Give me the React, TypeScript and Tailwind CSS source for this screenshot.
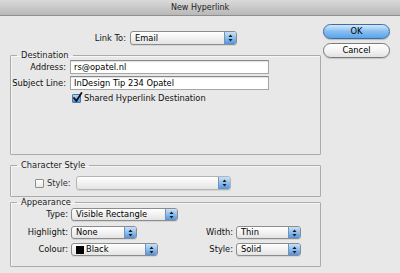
import React from "react";

const font = { fontFamily: '"DejaVu Sans", "Liberation Sans", sans-serif' };

function Arrows() {
  return (
    <svg width="5" height="8" viewBox="0 0 5 8" className="block">
      <path d="M2.5 0.5 L4.5 3 L0.5 3 Z" fill="#1a1a1a" />
      <path d="M2.5 7.5 L4.5 5 L0.5 5 Z" fill="#1a1a1a" />
    </svg>
  );
}

function Popup({
  w,
  h = 13,
  children,
  disabled = false,
}: {
  w: string;
  h?: number;
  children?: React.ReactNode;
  disabled?: boolean;
}) {
  return (
    <div
      className={`${w} ${h === 14 ? "h-[14px]" : "h-[13px]"} flex rounded-[3px] border ${
        disabled ? "border-[#b4b4b4]" : "border-[#8c8c8c]"
      } bg-linear-to-b from-[#ffffff] to-[#e4e4e4] shadow-[0_1px_0_rgba(0,0,0,0.08)] overflow-hidden`}
    >
      <div className="flex-1 flex items-center pl-[4px] leading-none text-black">{children}</div>
      <div className="w-[12px] flex items-center justify-center border-l border-[#6f93bd] bg-linear-to-b from-[#c9e0f7] via-[#8fbdeb] to-[#4f94dc]">
        <Arrows />
      </div>
    </div>
  );
}

function Input({ value }: { value: string }) {
  return (
    <div className="w-[199px] h-[14px] bg-white border border-[#a6a6a6] border-t-[#8a8a8a] shadow-[inset_0_1px_1px_rgba(0,0,0,0.12)] flex items-center pl-[3px] leading-none text-black">
      {value}
    </div>
  );
}

function Checkbox({ checked }: { checked?: boolean }) {
  return (
    <div
      className={`relative w-[9px] h-[9px] rounded-[1px] border ${
        checked
          ? "border-[#4a76a8] bg-linear-to-b from-[#b7d6f5] to-[#4f94dc]"
          : "border-[#8e8e8e] bg-linear-to-b from-[#ffffff] to-[#e9e9e9]"
      }`}
    >
      {checked && (
        <svg width="11" height="11" viewBox="0 0 11 11" className="absolute left-[-1px] top-[-3px]">
          <path d="M2 6 L4.3 9 L9.5 1" stroke="#111" strokeWidth="1.8" fill="none" strokeLinecap="round" strokeLinejoin="round" />
        </svg>
      )}
    </div>
  );
}

function Group({
  title,
  className,
  children,
}: {
  title: string;
  className: string;
  children: React.ReactNode;
}) {
  return (
    <fieldset className={`border border-[#ababab] rounded-[1px] shadow-[inset_1px_1px_0_#f6f6f6] ${className}`}>
      <legend className="ml-[6px] px-[4px] leading-[10px] text-[#1a1a1a]">{title}</legend>
      {children}
    </fieldset>
  );
}

export default function App() {
  return (
    <div className="w-[400px] h-[273px] bg-[#e8e8e8] flex flex-col text-[8.3px] text-[#111] overflow-hidden" style={font}>
      <div className="h-[16px] shrink-0 flex items-center justify-center bg-linear-to-b from-[#dadada] to-[#b8b8b8] border-b border-[#8f8f8f] text-[8px] text-[#222] leading-none">
        New Hyperlink
      </div>
      <div className="flex flex-1">
        <div className="w-[311px] ml-[10px] flex flex-col">
          <div className="mt-[15px] h-[14px] flex items-center">
            <span className="w-[116px] text-right">Link To:</span>
            <div className="ml-[4px]">
              <Popup w="w-[107px]" h={14}>Email</Popup>
            </div>
          </div>

          <Group title="Destination" className="mt-[5px] pb-[51px]">
            <div className="flex items-center h-[14px]">
              <span className="w-[55px] text-right">Address:</span>
              <div className="ml-[4px]">
                <Input value="rs@opatel.nl" />
              </div>
            </div>
            <div className="flex items-center h-[14px] mt-[2px]">
              <span className="w-[55px] text-right">Subject Line:</span>
              <div className="ml-[4px]">
                <Input value="InDesign Tip 234 Opatel" />
              </div>
            </div>
            <div className="flex items-center h-[10px] mt-[3px] pl-[61px]">
              <Checkbox checked />
              <span className="ml-[3px]">Shared Hyperlink Destination</span>
            </div>
          </Group>

          <Group title="Character Style" className="mt-[5px] pb-[6px]">
            <div className="flex items-center h-[14px] mt-[6px] pl-[24px]">
              <Checkbox />
              <span className="ml-[3px] text-[#333]">Style:</span>
              <div className="ml-[5px]">
                <Popup w="w-[155px]" h={14} disabled />
              </div>
            </div>
          </Group>

          <Group title="Appearance" className="mt-0 pb-[10px]">
            <div className="flex items-center h-[13px] mt-[1px]">
              <span className="w-[57px] text-right">Type:</span>
              <div className="ml-[3px]">
                <Popup w="w-[107px]">Visible Rectangle</Popup>
              </div>
            </div>
            <div className="flex items-center justify-between h-[13px] mt-[5px] pr-[19px]">
              <div className="flex items-center">
                <span className="w-[57px] text-right">Highlight:</span>
                <div className="ml-[3px]">
                  <Popup w="w-[66px]">None</Popup>
                </div>
              </div>
              <div className="flex items-center">
                <span className="text-right">Width:</span>
                <div className="ml-[3px]">
                  <Popup w="w-[65px]">Thin</Popup>
                </div>
              </div>
            </div>
            <div className="flex items-center justify-between h-[13px] mt-[4px] pr-[19px]">
              <div className="flex items-center">
                <span className="w-[57px] text-right">Colour:</span>
                <div className="ml-[3px]">
                  <Popup w="w-[87px]">
                    <span className="inline-block w-[8px] h-[8px] bg-black mr-[2px]" />
                    Black
                  </Popup>
                </div>
              </div>
              <div className="flex items-center">
                <span className="text-right">Style:</span>
                <div className="ml-[3px]">
                  <Popup w="w-[65px]">Solid</Popup>
                </div>
              </div>
            </div>
          </Group>
        </div>

        <div className="ml-[2px] w-[67px] flex flex-col">
          <div className="mt-[8px] h-[15px] rounded-full border border-[#3c6ea3] bg-linear-to-b from-[#d3e8fb] via-[#86bdf0] to-[#5aa4ea] flex items-center justify-center text-black leading-none shadow-[0_1px_1px_rgba(0,0,0,0.2)]">
            OK
          </div>
          <div className="mt-[4px] h-[15px] rounded-full border border-[#7a7a7a] bg-linear-to-b from-[#ffffff] via-[#f4f4f4] to-[#e2e2e2] flex items-center justify-center text-black leading-none shadow-[0_1px_1px_rgba(0,0,0,0.15)]">
            Cancel
          </div>
        </div>
      </div>
    </div>
  );
}
